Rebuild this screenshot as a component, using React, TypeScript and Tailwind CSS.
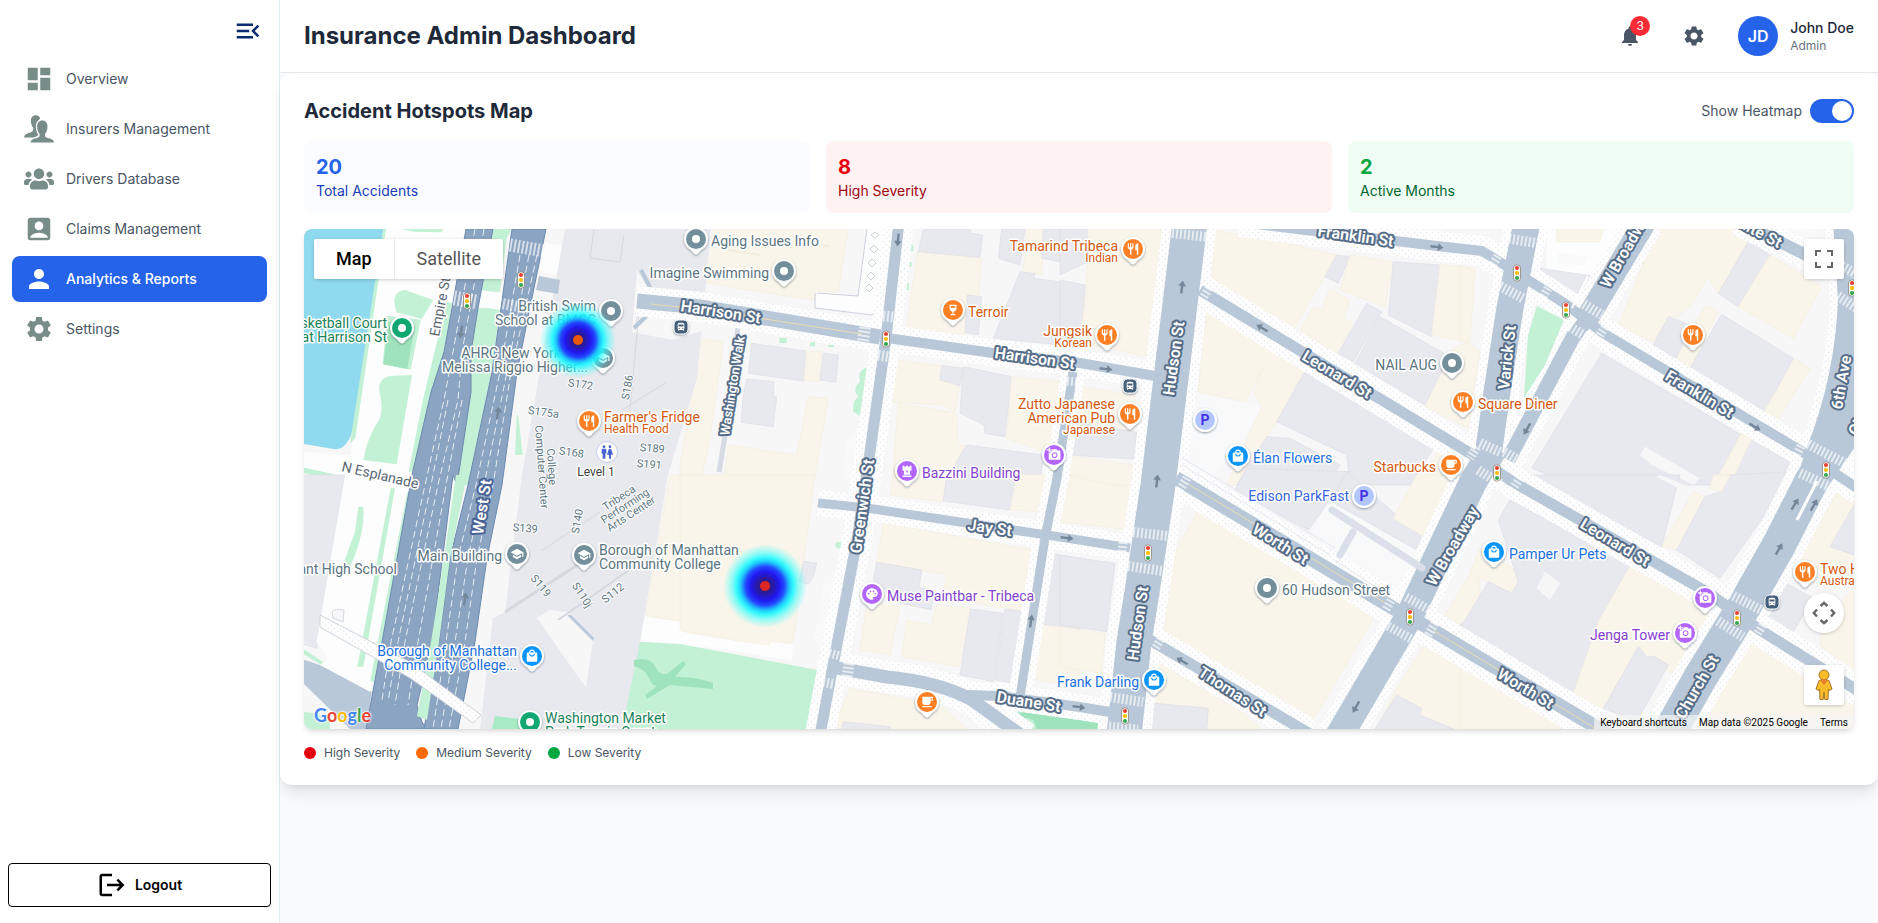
import { useState } from "react";
import type { ReactNode } from "react";
import {
  MdAccountBox,
  MdAddAPhoto,
  MdDashboard,
  MdDirectionsBus,
  MdLocalCafe,
  MdLocalMall,
  MdLogout,
  MdMenuOpen,
  MdNotifications,
  MdPalette,
  MdPerson,
  MdRestaurant,
  MdSchool,
  MdSettings,
  MdWc,
  MdWineBar,
} from "react-icons/md";
import { FaChessRook, FaUsers } from "react-icons/fa";

function TwoPeople({ size, className }: { size: number; className?: string }) {
  return (
    <svg width={size} height={size} viewBox="0 0 30 30" fill="currentColor" className={className} aria-hidden="true">
      <path d="M11.8,1.2C8.6,1.2 6.8,3.6 6.9,7C7,9.6 7.8,12.2 9.2,13.8C9.6,16 9.2,17.2 7.4,17.9C4.4,19 0.6,19.4 0,23.4H10.5L14.5,21 12.8,16 12.4,9 16.2,4.2C15.4,2.2 13.9,1.2 11.8,1.2Z" />
      <path
        d="M18.3,6.4C21.7,6.4 23.6,9 23.5,12.6C23.4,15.6 22.6,18.4 21,20V22.2C21.6,23.6 24,23.9 26,24.6C28.4,25.4 29.8,26.4 30,28.4H6.6C6.8,26.4 8.2,25.4 10.6,24.6C12.6,23.9 15,23.6 15.6,22.2V20C14,18.4 13.2,15.6 13.1,12.6C13,9 14.9,6.4 18.3,6.4Z"
        stroke="#ffffff"
        strokeWidth="2.4"
        paintOrder="stroke"
      />
    </svg>
  );
}

const NAV = [
  { label: "Overview", Icon: MdDashboard },
  { label: "Insurers Management", Icon: TwoPeople },
  { label: "Drivers Database", Icon: FaUsers },
  { label: "Claims Management", Icon: MdAccountBox },
  { label: "Analytics & Reports", Icon: MdPerson, active: true },
  { label: "Settings", Icon: MdSettings },
];

const STATS = [
  { value: "20", label: "Total Accidents", box: "bg-[#fbfcff]", num: "text-[#2563eb]", text: "text-blue-800" },
  { value: "8", label: "High Severity", box: "bg-red-50", num: "text-red-600", text: "text-red-800" },
  { value: "2", label: "Active Months", box: "bg-green-50", num: "text-green-600", text: "text-green-800" },
];

const LEGEND = [
  { label: "High Severity", dot: "bg-red-600" },
  { label: "Medium Severity", dot: "bg-orange-500" },
  { label: "Low Severity", dot: "bg-green-600" },
];

/* ---------- Map data ---------- */

const FILL = {
  tan: "#faf5ea",
  gray: "#e8e9ee",
  lawn: "#c3f1d5",
  wood: "#9fe3bc",
  bare: "#f7f7f7",
  water: "#8fdaee",
  road: "#b9c8d8",
  dots: "url(#dots)",
  hatch: "url(#hatch)",
};
type Fill = keyof typeof FILL;

// Each tile has its own origin; its shapes are drawn in thirds of a pixel.
const TILES: { x: number; y: number; shapes: [Fill, string][] }[] = [
  {
    x: 300,
    y: 225,
    shapes: [
      ["dots", "M255,12H500L460,240 345,780H0V680L150,690 165,600Z"],
      ["water", "M0,12H250L160,610Q140,680 100,672L0,655Z"],
      ["lawn", "M250,12H258L166,640 150,655Z"],
      ["lawn", "M305,12H430L425,22 340,20Z"],
      ["lawn", "M315,195L400,225 365,282 290,262Q268,200 315,195Z"],
      ["lawn", "M262,272L362,284 332,434 248,418Z"],
      ["wood", "M266,290L345,300 322,432 250,418Z"],
      ["lawn", "M270,453L336,450 290,718 190,705Q200,640 240,580 250,540 238,500 232,462 270,453Z"],
      ["lawn", "M440,230L456,235 434,380 394,500 342,740 326,740 370,520Z"],
      ["lawn", "M0,725L135,755 130,772 0,742Z"],
      ["gray", "M0,750L130,775 130,780H0Z"],
      ["lawn", "M578,12H635L620,40 600,200 545,200Z"],
      ["lawn", "M535,250H600L575,440 505,780H470L512,500V380Z"],
      ["dots", "M540,195L606,205 600,255 530,243Z"],
      ["dots", "M735,55L790,62 780,150 720,140Z"],
      ["lawn", "M650,570L655,572 668,690 645,690Z"],
    ],
  },
  {
    x: 680,
    y: 225,
    shapes: [
      ["tan", "M100,12H505L475,200 440,205 400,225 170,190 65,170Z"],
      ["dots", "M560,12H645L600,250 575,272 405,250 410,200 535,212Z"],
      ["gray", "M730,12H870L875,25 908,30 900,98 715,80Z"],
      ["tan", "M712,82L905,100 895,215 855,330 680,310Z"],
      ["gray", "M862,210L905,215 895,330 855,322Z"],
      ["gray", "M965,12H1035L1020,120 955,100Z"],
      ["tan", "M1040,12H1095L1085,150 1030,140Z"],
      ["gray", "M1020,140L1066,146 1062,160 1140,170V360L940,340Z"],
      ["gray", "M1090,12H1140V110L1085,100Z"],
      ["gray", "M215,355L380,378 370,468 205,445Z"],
      ["tan", "M380,378L425,380 418,470 372,465Z"],
      ["gray", "M430,385L475,390 468,472 420,465Z"],
      ["gray", "M200,462L282,470 280,512 290,516 280,605 183,592 190,510Z"],
      ["tan", "M65,340L130,350 90,640 60,780H0V720Z"],
      ["tan", "M385,515L445,520 400,780H130L145,660 350,690Z"],
      ["tan", "M650,405L850,430 840,480 825,560 790,540 630,530Z"],
      ["gray", "M785,422L850,430 840,482 780,465Z"],
      ["gray", "M850,425L995,455 975,635 915,625 912,600 840,565Z"],
      ["tan", "M995,455L1165,470 1120,690 980,640Z"],
      ["tan", "M655,535L830,565 835,660 1000,680 800,780H636Z"],
      ["gray", "M860,660L1090,690 1080,780H800L835,700Z"],
      ["lawn", "M565,425L545,575 520,560Q515,530 535,515 515,490 540,470 530,435 565,425Z"],
      ["lawn", "M298,338H320V354H298ZM390,352H405V364H390ZM445,360H462V367H445ZM690,60H700V78H690ZM684,112H695V125H684ZM676,174H687V195H676Z"],
      ["hatch", "M540,620L500,650 492,740 520,780H545Z"],
    ],
  },
  {
    x: 1060,
    y: 225,
    shapes: [
      ["gray", "M0,12H85L75,115 0,150Z"],
      ["gray", "M0,165L75,180 65,360 0,350Z"],
      ["tan", "M85,12H305L265,395 60,352 80,180Z"],
      ["tan", "M465,15L660,50 830,90 700,315 450,175Z"],
      ["gray", "M830,90L870,95 835,175 795,155Z"],
      ["tan", "M870,90L1000,110 975,245 840,195Z"],
      ["tan", "M810,190L870,225 850,280 880,295 830,385 720,320 760,245 785,255Z"],
      ["gray", "M1000,110L1140,120 1115,335 985,270Z"],
      ["tan", "M1140,118L1245,130 1220,350 1115,330Z"],
      ["gray", "M920,235L965,260 880,410 835,385Z"],
      ["gray", "M960,275L1170,395 1095,540 885,415Z"],
      ["tan", "M1180,370L1225,350 1260,380 1225,610 1095,545Z"],
      ["tan", "M440,255L735,430 650,590 620,635 545,780H500L605,545 580,500 610,425 555,530 415,500Z"],
      ["gray", "M735,440L1130,655 1050,780H870L860,690 650,590Z"],
      ["hatch", "M410,510L605,540 530,690 440,770 355,690Z"],
      ["gray", "M620,635L690,640 840,720 800,780H530Z"],
      ["tan", "M1140,665L1230,700 1210,780H1080Z"],
      ["tan", "M30,480L225,510 220,620 30,590Z"],
      ["gray", "M45,592L230,622 222,702 20,690Z"],
      ["tan", "M10,690L222,720 215,780H0Z"],
    ],
  },
  {
    x: 1460,
    y: 225,
    shapes: [
      ["tan", "M0,120L45,140 30,350 0,350Z"],
      ["dots", "M260,12H480L400,150 260,140Z"],
      ["tan", "M290,12H430L420,50 290,50Z"],
      ["gray", "M240,130L390,152 340,250 230,190Z"],
      ["hatch", "M295,85L385,95 370,122 295,115Z"],
      ["tan", "M590,12H850L865,50 775,205 745,155 695,240 650,275 625,275 580,350 475,305Z"],
      ["gray", "M865,50L930,90 835,245 775,205Z"],
      ["tan", "M930,90L1085,185 1000,340 835,245Z"],
      ["gray", "M625,275L690,300 650,400 580,360Z"],
      ["tan", "M740,240L775,260 690,430 650,400 700,300Z"],
      ["gray", "M785,268L1000,400 910,565 690,430Z"],
      ["tan", "M1005,400L1050,430 950,590 910,565Z"],
      ["gray", "M425,385L640,510 845,630 990,710 955,780H340L215,730Z"],
      ["tan", "M845,625L875,640 810,780H760Z"],
      ["bare", "M555,665L720,760 700,780 575,720 540,690Z"],
      ["hatch", "M970,12H1080L1050,70Z"],
    ],
  },
  {
    x: 300,
    y: 475,
    shapes: [
      ["gray", "M0,0H135L50,520 0,505Z"],
      ["dots", "M135,0H340L300,240 215,640 90,560 50,500Z"],
      ["lawn", "M175,95H190Q195,160 165,240L150,275 132,262 165,170Z"],
      ["lawn", "M272,40H285L190,575H172Z"],
      ["lawn", "M322,50H332L222,620H210Z"],
      ["lawn", "M0,515L90,575 80,580 0,530Z"],
      ["road", "M0,550L60,570 215,650 200,762H150L0,615Z"],
      ["dots", "M60,570L100,540 215,620 210,650Z"],
      ["lawn", "M0,710L50,715 90,740V762H0Z"],
      ["tan", "M1110,0H1200V480L1140,470V440L1035,420Z"],
      ["dots", "M1035,425L1140,440 1145,470 1200,480V520L1020,495Z"],
      ["lawn", "M1015,500L1200,520V762H975Z"],
    ],
  },
  {
    x: 680,
    y: 475,
    shapes: [
      ["tan", "M0,0H405L340,500 265,515 0,465Z"],
      ["dots", "M0,475L265,512 275,500 340,510 335,555 0,505Z"],
      ["gray", "M370,258L410,265 400,305 385,328 358,320Z"],
      ["lawn", "M492,58L508,62 494,114 480,110ZM466,211A10,10 0 1 0 486,211A10,10 0 1 0 466,211Z"],
      ["tan", "M640,0H800L790,80 630,60Z"],
      ["gray", "M800,0H1010L990,105 790,78Z"],
      ["tan", "M1010,0H1110L1090,110 990,105Z"],
      ["tan", "M1140,0H1200V145L1125,130Z"],
      ["tan", "M610,145L1060,225 1030,405 940,395 785,365 800,300 590,262Z"],
      ["gray", "M590,262L725,285 718,335 758,350 755,405 665,385 580,315Z"],
      ["tan", "M560,380L660,395 630,540 540,525Z"],
      ["tan", "M680,435L755,450 770,390 870,400 840,575 665,545Z"],
      ["gray", "M872,402L970,415 940,620 840,600Z"],
      ["gray", "M975,402L1030,410 1005,625 945,615Z"],
      ["gray", "M1110,235L1200,250V470L1075,445Z"],
      ["tan", "M1075,448L1200,465V640L1055,610Z"],
      ["tan", "M510,640L780,690 860,762H460Z"],
      ["gray", "M490,740L630,755V762H485Z"],
      ["lawn", "M925,695L1200,725V762H1015Z"],
      ["wood", "M1010,735Q1015,700 1060,715 1090,705 1110,725 1130,720 1200,735V762H1070L1060,735 1040,728Z"],
      ["hatch", "M475,280L425,525 402,485 435,310Z"],
    ],
  },
  {
    x: 1060,
    y: 475,
    shapes: [
      ["tan", "M0,0L225,40 210,165 0,140Z"],
      ["gray", "M0,240L165,265 140,470 0,450Z"],
      ["tan", "M0,455L135,475 125,595 0,575Z"],
      ["tan", "M415,105L580,190 945,400 940,430 760,735 500,600 310,480 340,240Z"],
      ["tan", "M290,560L560,720 600,762H270Z"],
      ["gray", "M285,685L445,700 440,762H270Z"],
      ["wood", "M0,725L110,738Q142,745 140,762H0Z"],
      ["hatch", "M810,75L1120,240 1030,375 750,175Z"],
      ["gray", "M560,-20L870,-10 745,165 525,45Z"],
      ["gray", "M860,-10L1090,190 1070,225 815,80Z"],
      ["tan", "M1070,0H1215L1100,190 1000,130Z"],
      ["tan", "M1235,290L1260,300V410L1200,450 1155,420Z"],
      ["gray", "M1245,410L1260,380V480L1200,450Z"],
      ["tan", "M1095,505L1260,600V762H950L1005,650Z"],
      ["gray", "M1010,660L1085,700 1080,720 1180,762H945Z"],
    ],
  },
  {
    x: 1460,
    y: 475,
    shapes: [
      ["tan", "M30,295L155,355 190,300 60,220Z"],
      ["gray", "M150,75L510,270 415,440 340,655 0,460 85,320 155,355 175,320 115,135Z"],
      ["bare", "M255,290L300,325 270,375 230,340Z"],
      ["tan", "M510,272L700,385 775,420 640,600 535,515 430,700 340,655 415,440Z"],
      ["gray", "M535,515L560,545 585,545 625,570 530,740 430,700Z"],
      ["gray", "M215,0H660L605,215 465,140Z"],
      ["bare", "M600,0L760,65 740,85 590,5Z"],
      ["tan", "M700,50L735,65 650,225 605,215Z"],
      ["gray", "M735,65L780,50 800,0 1000,-10 985,20 780,310 650,225Z"],
      ["tan", "M760,0L810,0 785,50 750,40Z"],
      ["tan", "M1130,55L1182,80V340L1020,250Z"],
      ["gray", "M1182,90V240L1110,215Z"],
      ["gray", "M970,320L1060,370 1000,470 920,430Z"],
      ["tan", "M1090,440L1182,340V590L1080,510Z"],
      ["tan", "M890,470L1182,640V762H700Z"],
      ["tan", "M0,570L400,762H0Z"],
    ],
  },
];

// Centre lines of the streets: path, road width, pavement width.
const STREETS: [string, number, number][] = [
  ["M637,301L700,307 880,337", 15, 30],
  ["M880,337L993,353 1080,363 1155,376", 10, 27],
  ["M899,222L886,338 870,452 857,540 834,660 820,735", 11, 30],
  ["M1190,222L1158,485 1142,592 1134,642 1124,735", 35, 54],
  ["M1240,222L1330,233 1437,246 1482,251 1500,262 1567,305 1603,333 1803,452 1860,490", 10, 30],
  ["M1200,290L1473,455 1513,482 1707,592 1760,630 1860,692", 11, 32],
  ["M818,503L867,508 960,522 1047,535 1130,548", 9, 26],
  ["M1073,372L1057,478 1045,538 1020,697", 9, 24],
  ["M837,668L887,677Q940,682 972,700L1025,738", 13, 32],
  ["M967,695L1000,696 1080,707 1110,712", 10, 26],
  ["M1176,478L1393,608 1427,627 1503,672 1620,741", 14, 36],
  ["M1150,640L1310,734", 11, 30],
  ["M1645,222L1585,322", 23, 38],
  ["M1585,322L1573,337 1508,460", 15, 32],
  ["M1494,448L1473,482 1410,615 1338,738", 28, 44],
  ["M1527,222L1510,308 1497,392 1486,470", 27, 44],
  ["M1848,222L1853,300Q1850,380 1820,455L1812,480", 30, 46],
  ["M1870,395L1812,480 1779,545 1745,605 1700,678 1668,735", 34, 52],
  ["M1738,222L1760,232 1840,272", 12, 28],
];

const CENTRE_STRIPES = ["M650,304L700,309 862,334", "M1188,484L1384,602", "M1434,631L1600,731"];

const CROSSWALKS: [string, number][] = [
  ["M1172,233L1208,237", 10],
  ["M1133,532L1167,536", 10],
  ["M1128,566L1162,571", 10],
  ["M1110,697L1143,702", 10],
  ["M1109,726L1138,729", 9],
  ["M1123,542L1122,553", 9],
  ["M865,327L863,341", 12],
  ["M883,316L893,317", 11],
  ["M878,355L890,357", 11],
  ["M849,663L847,677", 11],
  ["M829,653L840,656", 9],
  ["M823,682L834,684", 10],
  ["M1067,381L1077,382", 9],
  ["M1209,288L1203,298", 9],
  ["M1477,447L1470,458", 9],
  ["M1520,478L1512,490", 9],
  ["M1187,478L1179,491", 9],
  ["M1393,597L1385,611", 9],
  ["M1435,623L1427,637", 9],
  ["M1161,639L1155,649", 9],
  ["M1406,597L1430,610", 9],
  ["M1388,626L1413,640", 9],
  ["M1505,238L1542,244", 10],
  ["M1500,286L1524,299", 10],
  ["M1480,443L1500,452", 10],
  ["M1504,452L1518,460", 10],
  ["M1478,470L1502,485", 10],
  ["M1498,256L1492,266", 9],
  ["M1548,288L1542,299", 9],
  ["M1577,300L1602,315", 10],
  ["M1570,327L1587,337", 10],
  ["M1605,327L1598,338", 9],
  ["M1838,264L1858,275", 10],
  ["M1838,296L1858,309", 10],
  ["M1808,444L1850,466", 10],
  ["M1800,473L1832,488", 10],
  ["M1801,446L1796,456", 9],
  ["M1730,594L1763,611", 10],
  ["M1718,621L1743,637", 10],
  ["M1763,625L1756,636", 9],
  ["M510,245L544,251", 13],
  ["M454,298L477,302", 15],
  ["M499,303L531,309", 11],
];

const ARROWS: [number, number, number][] = [
  [898, 240, 186],
  [1182, 287, 7],
  [1262, 328, -60],
  [1437, 247, 97],
  [1106, 369, 97],
  [1157, 481, 7],
  [1527, 429, 210],
  [1755, 427, 121],
  [465, 599, 10],
  [461, 332, 190],
  [498, 413, 10],
  [1067, 538, 97],
  [1031, 621, 8],
  [1079, 707, 98],
  [1182, 661, -60],
  [1356, 707, 210],
  [1795, 504, 32],
  [1814, 505, 30],
  [1779, 549, 30],
];

const SIGNALS: [number, number][] = [
  [521, 280],
  [467, 301],
  [886, 339],
  [1517, 273],
  [1566, 310],
  [1497, 473],
  [1826, 470],
  [1852, 288],
  [1148, 553],
  [1125, 716],
  [1410, 617],
  [1737, 618],
];

const STREET_NAMES: [string, number, number, number, number?][] = [
  ["Harrison St", 680, 311, 9],
  ["Harrison St", 994, 358, 8],
  ["Washington Walk", 729, 436, -81, 13],
  ["Greenwich St", 861, 554, -82],
  ["Hudson St", 1174, 396, -82],
  ["Hudson St", 1138, 661, -82],
  ["Varick St", 1509, 390, -84],
  ["W Broadway", 1609, 289, -60],
  ["W Broadway", 1435, 587, -60],
  ["6th Ave", 1842, 410, -80],
  ["Church St", 1684, 720, -60],
  ["Church St", 1857, 437, -60],
  ["Franklin St", 1317, 236, 8],
  ["Franklin St", 1664, 379, 31],
  ["Leonard St", 1301, 359, 31],
  ["Leonard St", 1579, 527, 31],
  ["Worth St", 1251, 532, 32],
  ["Worth St", 1496, 677, 31],
  ["Thomas St", 1197, 675, 33],
  ["Jay St", 967, 530, 8],
  ["Duane St", 996, 702, 9],
  ["White St", 1725, 220, 28],
];

const INDOOR_NAMES: [string, number, number, number][] = [
  ["S172", 580, 388, 8],
  ["S186", 631, 388, -80],
  ["S175a", 543, 416, 8],
  ["S168", 571, 456, 8],
  ["S189", 652, 452, 5],
  ["S191", 649, 468, 5],
  ["S139", 525, 532, 5],
  ["S140", 581, 522, -80],
  ["S119", 538, 588, 50],
  ["S110j", 579, 597, 57],
  ["S112", 615, 596, -38],
  ["Computer Center", 538, 467, 86],
  ["College", 548, 467, 86],
  ["Tribeca", 621, 501, -33],
  ["Performing", 627, 509, -33],
  ["Arts Center", 633, 517, -33],
];

const TONES = {
  slate: { pin: "#738f9b", text: "#5b7480" },
  orange: { pin: "#ff7f25", text: "#d4570e" },
  green: { pin: "#13a871", text: "#188259" },
  blue: { pin: "#0a94ff", text: "#1a6fe0" },
  purple: { pin: "#b266ff", text: "#8441cf" },
};

const GLYPHS = {
  dot: <circle r="4" fill="#fff" />,
  food: <MdRestaurant x="-7" y="-7" size={14} />,
  cafe: <MdLocalCafe x="-7" y="-7" size={14} />,
  bag: <MdLocalMall x="-7" y="-7" size={14} />,
  school: <MdSchool x="-7" y="-7" size={14} />,
  wine: <MdWineBar x="-7" y="-7" size={14} />,
  camera: <MdAddAPhoto x="-7" y="-8" size={14} />,
  palette: <MdPalette x="-7" y="-7" size={14} />,
  rook: <FaChessRook x="-6" y="-6" size={12} />,
};

type Place = {
  x: number;
  y: number;
  tone: keyof typeof TONES;
  glyph: keyof typeof GLYPHS;
  lines?: string[];
  sub?: string;
  side?: "left" | "right";
  top?: number;
};

const PLACES: Place[] = [
  { x: 696, y: 239, tone: "slate", glyph: "dot", lines: ["Aging Issues Info"], side: "right", top: 246 },
  { x: 784, y: 271, tone: "slate", glyph: "dot", lines: ["Imagine Swimming"], side: "left", top: 278 },
  { x: 953, y: 310, tone: "orange", glyph: "wine", lines: ["Terroir"], side: "right", top: 317 },
  { x: 1054, y: 455, tone: "purple", glyph: "camera" },
  { x: 907, y: 471, tone: "purple", glyph: "rook", lines: ["Bazzini Building"], side: "right", top: 478 },
  { x: 402, y: 328, tone: "green", glyph: "dot", lines: ["Basketball Court", "at Harrison St"], side: "left", top: 328 },
  { x: 611, y: 311, tone: "slate", glyph: "dot", lines: ["British Swim", "School at BMCC"], side: "left", top: 311 },
  { x: 603, y: 358, tone: "slate", glyph: "school", lines: ["AHRC New York City", "Melissa Riggio Higher..."], side: "left", top: 358 },
  { x: 589, y: 421, tone: "orange", glyph: "food", lines: ["Farmer's Fridge"], sub: "Health Food", side: "right", top: 422 },
  { x: 1133, y: 249, tone: "orange", glyph: "food", lines: ["Tamarind Tribeca"], sub: "Indian", side: "left", top: 251 },
  { x: 1107, y: 335, tone: "orange", glyph: "food", lines: ["Jungsik"], sub: "Korean", side: "left", top: 336 },
  { x: 1130, y: 414, tone: "orange", glyph: "food", lines: ["Zutto Japanese", "American Pub"], sub: "Japanese", side: "left", top: 409 },
  { x: 1238, y: 456, tone: "blue", glyph: "bag", lines: ["Élan Flowers"], side: "right", top: 463 },
  { x: 1452, y: 363, tone: "slate", glyph: "dot", lines: ["NAIL AUG"], side: "left", top: 370 },
  { x: 1463, y: 402, tone: "orange", glyph: "food", lines: ["Square Diner"], side: "right", top: 409 },
  { x: 1451, y: 465, tone: "orange", glyph: "cafe", lines: ["Starbucks"], side: "left", top: 472 },
  { x: 1693, y: 335, tone: "orange", glyph: "food" },
  { x: 517, y: 554, tone: "slate", glyph: "school", lines: ["Main Building"], side: "left", top: 561 },
  { x: 584, y: 555, tone: "slate", glyph: "school", lines: ["Borough of Manhattan", "Community College"], side: "right", top: 555 },
  { x: 532, y: 656, tone: "blue", glyph: "bag", lines: ["Borough of Manhattan", "Community College..."], side: "left", top: 656 },
  { x: 530, y: 722, tone: "green", glyph: "dot", lines: ["Washington Market", "Park Tennis Court"], side: "right", top: 723 },
  { x: 872, y: 594, tone: "purple", glyph: "palette", lines: ["Muse Paintbar - Tribeca"], side: "right", top: 601 },
  { x: 927, y: 702, tone: "orange", glyph: "cafe" },
  { x: 1267, y: 588, tone: "slate", glyph: "dot", lines: ["60 Hudson Street"], side: "right", top: 595 },
  { x: 1154, y: 680, tone: "blue", glyph: "bag", lines: ["Frank Darling"], side: "left", top: 687 },
  { x: 1494, y: 552, tone: "blue", glyph: "bag", lines: ["Pamper Ur Pets"], side: "right", top: 559 },
  { x: 1705, y: 598, tone: "purple", glyph: "camera" },
  { x: 1685, y: 633, tone: "purple", glyph: "camera", lines: ["Jenga Tower"], side: "left", top: 640 },
  { x: 1805, y: 572, tone: "orange", glyph: "food", lines: ["Two Hands"], sub: "Australian", side: "right", top: 574 },
];

const HALO = { stroke: "#ffffff", strokeWidth: 3, strokeLinejoin: "round", paintOrder: "stroke" } as const;

function PlaceMark({ place }: { place: Place }) {
  const tone = TONES[place.tone];
  const right = place.side === "right";
  const textX = right ? place.x + 15 : place.x - 15;
  const anchor = right ? "start" : "end";
  const lines = place.lines ?? [];
  const top = place.top ?? 0;
  return (
    <g>
      <g transform={`translate(${place.x} ${place.y})`} color="#fff">
        <path
          d="M0,15.5C-2,15.5 -3,12.5 -6.5,10A12,12 0 1 1 6.5,10C3,12.5 2,15.5 0,15.5Z"
          fill="#fff"
          filter="url(#lift)"
        />
        <circle r="10" fill={tone.pin} />
        {GLYPHS[place.glyph]}
      </g>
      {lines.map((line, i) => (
        <text key={line} x={textX} y={top + i * 14} textAnchor={anchor} fontSize="14" fill={tone.text} {...HALO}>
          {line}
        </text>
      ))}
      {place.sub && (
        <text x={textX} y={top + lines.length * 14 - 3} textAnchor={anchor} fontSize="12" fill={tone.text} {...HALO}>
          {place.sub}
        </text>
      )}
    </g>
  );
}

function CityMap({ heat }: { heat: boolean }) {
  return (
    <svg
      viewBox="304 229 1550 500"
      preserveAspectRatio="xMidYMid slice"
      role="img"
      aria-label="Street map of accident hotspots"
      className="block h-full w-full font-['Roboto',sans-serif]"
    >
      <defs>
        <pattern id="dots" width="6" height="6" patternUnits="userSpaceOnUse">
          <rect width="6" height="6" fill="#ffffff" />
          <circle cx="1.5" cy="1.5" r="0.9" fill="#ebedf0" />
          <circle cx="4.5" cy="4.5" r="0.9" fill="#ebedf0" />
        </pattern>
        <pattern id="hatch" width="5" height="5" patternUnits="userSpaceOnUse" patternTransform="rotate(40)">
          <rect width="5" height="5" fill="#ffffff" />
          <rect width="1" height="5" fill="#dfe1e6" />
        </pattern>
        <filter id="lift" x="-30%" y="-30%" width="160%" height="170%">
          <feDropShadow dx="0" dy="1" stdDeviation="1" floodColor="#33475b" floodOpacity="0.55" />
        </filter>
        <radialGradient id="heat">
          <stop offset="0" stopColor="#2b1a5e" />
          <stop offset="0.18" stopColor="#2a1a9c" />
          <stop offset="0.34" stopColor="#2018f0" />
          <stop offset="0.46" stopColor="#1a40ff" stopOpacity="0.96" />
          <stop offset="0.58" stopColor="#12c4ff" stopOpacity="0.94" />
          <stop offset="0.67" stopColor="#14f8ff" stopOpacity="0.88" />
          <stop offset="0.8" stopColor="#2cffff" stopOpacity="0.5" />
          <stop offset="1" stopColor="#40ffff" stopOpacity="0" />
        </radialGradient>
      </defs>

      <rect x="304" y="229" width="1550" height="500" fill="#f7f7f7" />

      {TILES.map((tile) => (
        <g key={`${tile.x}-${tile.y}`} transform={`translate(${tile.x} ${tile.y}) scale(0.33333)`}>
          {tile.shapes.map(([fill, d]) => (
            <path
              key={d}
              d={d}
              fill={FILL[fill]}
              stroke={fill === "gray" ? "#dcdee7" : fill === "tan" ? "#f4eedf" : "none"}
              strokeWidth="2"
            />
          ))}
        </g>
      ))}

      {/* College building and the wedge-shaped court inside it */}
      <path d="M565,229H711L697,378 668,475 640,642 628,729H480L493,618 505,612 522,475 547,330Z" fill="#e8e9ee" />
      <path d="M640,642L680,644 818,670 808,729H622Z" fill="#c3f1d5" />
      <path
        d="M634,660C661,655 651,675 667,674L683,661 686,664 675,677Q695,676 713,683V689L670,685 647,699 645,695 657,686C647,685 653,672 634,666Z"
        fill="#9fe3bc"
      />
      <path d="M495,716L520,719V729H492Z" fill="#a8eac3" />
      <path d="M637,270L655,300 712,312V328L672,340 632,332Z" fill="#f7f7f7" />
      <path d="M537,618L550,610 567,612 593,640 586,688Z" fill="#f7f7f7" />
      <path d="M567,615H571L594,638 593,641Z" fill="#b9c8d8" />
      <g fill="none" stroke="#d6d8e0">
        <path d="M505,612L582,562" strokeWidth="3" />
        <path d="M558,620L632,568" strokeWidth="2" />
        <path d="M622,410L667,382M594,229L590,258 620,262 624,235M640,300L630,410M541,551L600,512" strokeWidth="1" />
      </g>
      <path d="M654,262C650,285 640,300 634,330" fill="none" stroke="#e0e2e8" strokeWidth="1" />
      <path d="M641,270L655,297M655,308L634,328" stroke="#b9c8d8" strokeWidth="4" />
      <path d="M728,250L760,255M775,240L830,246" stroke="#f4eedf" strokeWidth="2" />

      {/* Walkway west of Greenwich and the diamond planters */}
      <path d="M738,325L731,400 719,472" fill="none" stroke="#d5dae4" strokeWidth="5" />
      <g fill="none" stroke="#cdd1db" strokeWidth="1">
        <path d="M867,229L858,296 817,293M886,229L880,308 872,315 815,308V293" />
        <path d="M875,232l4,3-4,3-4-3zM874,245l4,4-4,4-4-4zM872,259l4,4-4,4-4-4zM871,272l4,4-4,4-4-4zM869,284l4,4-4,4-4-4z" />
      </g>

      {/* Pavements, then carriageways */}
      <g fill="none" stroke="url(#dots)" strokeLinejoin="round">
        {STREETS.map(([d, , pavement]) => (
          <path key={d} d={d} strokeWidth={pavement} />
        ))}
      </g>
      <g fill="none" stroke="#b9c8d8" strokeLinejoin="round">
        {STREETS.map(([d, road]) => (
          <path key={d} d={d} strokeWidth={road} />
        ))}
      </g>
      <path d="M1537,306L1564,320 1545,365 1524,398 1528,335Z" fill="#c3f1d5" />
      <path d="M1588,276L1572,308" stroke="#ffffff" strokeWidth="2" />
      <path d="M1817,481L1797,520" stroke="#ffffff" strokeWidth="3" />
      <path d="M1332,510L1422,568M1353,532L1340,555" stroke="#dbdfe9" strokeWidth="7" strokeLinecap="round" />
      <g fill="none" stroke="#e5e7ee" strokeWidth="1">
        <path d="M1182,465L1330,555M1335,560L1395,600M1182,458L1335,548" />
      </g>
      <g fill="none" stroke="#e9dcb2" strokeWidth="1">
        {CENTRE_STRIPES.map((d) => (
          <path key={d} d={d} />
        ))}
      </g>

      {/* West Street */}
      <path d="M539,276L560,280 558,294 536,290Z" fill="#b9c8d8" />
      <g fill="#8ba4c1" stroke="#6c8ab2" strokeWidth="1">
        <path d="M466,229H493L478,308 471,352V392L457,485 453,475 432,642 417,705 422,722 427,729H366L382,642 412,475 431,392 444,352 452,308Z" />
        <path d="M512,229H546L517,372 502,485 487,558 475,642 458,729H424L439,642 450,558 468,485 492,372Z" />
      </g>
      <path d="M456,475L467,475 450,558 439,642 427,720 417,716 420,700 431,642 444,558Z" fill="#c3f1d5" />
      <g fill="none" stroke="#e6ecf4" strokeWidth="1" strokeDasharray="7 4">
        <path d="M475,229L461,308 453,352 444,400 425,485 391,642 382,700" />
        <path d="M484,229L470,308 462,352 458,400 438,485 405,642 395,705" />
        <path d="M448,400L431,485 398,642 388,702" />
        <path d="M462,400L446,485 418,642 408,705" />
        <path d="M520,255L500,372 476,485 458,558 446,642 433,729" />
        <path d="M529,255L507,372 484,485 468,558 455,642 441,729" />
        <path d="M537,255L511,372 493,485 477,558 465,642 449,729" />
      </g>
      <path d="M320,615L410,662 481,715 473,723 410,678 320,627Z" fill="url(#dots)" stroke="#cfd3dd" strokeWidth="1" />
      <path d="M332,612Q334,608 344,610L343,622 333,618Z" fill="#f7f7f7" stroke="#d6d8e0" strokeWidth="1" />

      <g fill="none" stroke="#ffffff" strokeOpacity="0.65" strokeDasharray="2 2">
        {CROSSWALKS.map(([d, width]) => (
          <path key={d} d={d} strokeWidth={width} />
        ))}
      </g>
      <g fill="#74869a">
        {ARROWS.map(([x, y, angle]) => (
          <path
            key={`${x}-${y}`}
            transform={`translate(${x} ${y}) rotate(${angle})`}
            d="M0,-6.5L3.8,-1H1.2V6.5H-1.2V-1H-3.8Z"
          />
        ))}
      </g>

      {SIGNALS.map(([x, y]) => (
        <g key={`${x}-${y}`} transform={`translate(${x} ${y})`}>
          <rect x="-3.5" y="-8" width="7" height="16" rx="3" fill="#fff" stroke="#8e8378" strokeWidth="0.8" />
          <circle cy="-5" r="2.1" fill="#ea4335" />
          <circle r="2.1" fill="#fbbc04" />
          <circle cy="5" r="2.1" fill="#34a853" />
        </g>
      ))}

      {/* Street names */}
      <g fill="#ffffff" stroke="#566d88" strokeWidth="4" strokeLinejoin="round" fontWeight="600" paintOrder="stroke">
        {STREET_NAMES.map(([name, x, y, angle, size]) => (
          <text key={`${name}-${x}`} fontSize={size ?? 16} transform={`translate(${x} ${y}) rotate(${angle})`}>
            {name}
          </text>
        ))}
        <text fontSize="16" stroke="#4a6395" transform="translate(483 535) rotate(-81)">
          West St
        </text>
      </g>
      <g fontSize="14" fill="#5a6675" {...HALO}>
        <text transform="translate(439 337) rotate(-79)">Empire State</text>
        <text transform="translate(341 471) rotate(13)">N Esplanade</text>
        <text x="397" y="574" textAnchor="end" fill="#5b7480">
          Stuyvesant High School
        </text>
      </g>
      <g fontSize="11" fill="#5b7480" textAnchor="middle" {...HALO} strokeWidth={2}>
        {INDOOR_NAMES.map(([name, x, y, angle]) => (
          <text key={name} transform={`translate(${x} ${y}) rotate(${angle})`}>
            {name}
          </text>
        ))}
      </g>
      <text x="596" y="476" fontSize="12" textAnchor="middle" fill="#3c4043" {...HALO}>
        Level 1
      </text>

      {/* Points of interest */}
      {[
        [681, 327],
        [1130, 386],
        [1772, 602],
      ].map(([x, y]) => (
        <g key={x} transform={`translate(${x} ${y})`} color="#fff">
          <rect x="-7" y="-7" width="14" height="14" rx="4.5" fill="#455f7a" stroke="#fff" strokeWidth="1" filter="url(#lift)" />
          <MdDirectionsBus x="-5" y="-5" size={10} />
        </g>
      ))}
      {[
        [1205, 420],
        [1364, 496],
      ].map(([x, y]) => (
        <g key={x} transform={`translate(${x} ${y})`}>
          <circle r="12" fill="#fff" filter="url(#lift)" />
          <circle r="10" fill="#b3c6ff" />
          <text y="5" textAnchor="middle" fontSize="14" fontWeight="700" fill="#4533e8">
            P
          </text>
        </g>
      ))}
      <text x="1349" y="501" textAnchor="end" fontSize="14" fill="#3763dc" {...HALO}>
        Edison ParkFast
      </text>
      <g transform="translate(607 452)" color="#4a62cf">
        <circle r="10.5" fill="#fff" stroke="#c3cbf5" strokeWidth="1" />
        <MdWc x="-8" y="-8" size={16} />
      </g>
      {PLACES.map((place) => (
        <PlaceMark key={`${place.x}-${place.y}`} place={place} />
      ))}

      {heat && (
        <g>
          <circle cx="578" cy="340" r="38" fill="url(#heat)" />
          <circle cx="765" cy="586" r="42" fill="url(#heat)" />
        </g>
      )}
      <circle cx="578" cy="340" r="5" fill="#ea580c" />
      <circle cx="765" cy="586" r="5" fill="#dc2626" />
    </svg>
  );
}

function MapButton({ label, className, children }: { label: string; className: string; children: ReactNode }) {
  return (
    <button
      type="button"
      aria-label={label}
      className={`flex size-10 items-center justify-center bg-white shadow-[0_1px_4px_-1px_rgba(0,0,0,0.3)] ${className}`}
    >
      {children}
    </button>
  );
}

function Pegman() {
  return (
    <svg width="20" height="32" viewBox="0 0 20 32" aria-hidden="true">
      <g fill="#fbbc2c" stroke="#a5772a" strokeWidth="1" strokeLinejoin="round">
        <path d="M5,11.5Q10,9 15,11.5L18,20 15.5,21.5 14.5,20 14,30.5H10.8L10,23 9.2,30.5H6L5.5,20 4.5,21.5 2,20Z" />
        <circle cx="10" cy="6" r="5" />
      </g>
      <path d="M6,11.5H14L10,16Z" fill="#e37f2c" />
    </svg>
  );
}

export default function App() {
  const [heat, setHeat] = useState(true);

  return (
    <div className="flex min-h-screen bg-[#f8fafc] font-['Inter',sans-serif]">
      <aside className="flex w-[280px] shrink-0 flex-col border-r border-[#e3eef2] bg-white">
        <div className="flex h-14 items-start justify-end px-4 pt-4">
          <button type="button" aria-label="Collapse menu" className="text-[#0b2a6f]">
            <MdMenuOpen size={30} />
          </button>
        </div>
        <nav className="flex flex-col gap-1 px-3">
          {NAV.map(({ label, Icon, active }) => (
            <a
              key={label}
              href="#"
              aria-current={active ? "page" : undefined}
              className={
                active
                  ? "flex items-center gap-3 rounded-lg bg-[#2563eb] px-3 py-2 text-sm font-medium text-white"
                  : "flex items-center gap-3 rounded-lg px-3 py-2 text-sm text-gray-600"
              }
            >
              <Icon size={30} className={active ? "text-white" : "text-[#788d88]"} />
              {label}
            </a>
          ))}
        </nav>
        <div className="mt-auto px-2 pb-4">
          <button
            type="button"
            className="flex h-11 w-full items-center justify-center gap-2 rounded border border-black text-sm font-semibold text-black"
          >
            <MdLogout size={30} />
            Logout
          </button>
        </div>
      </aside>

      <div className="flex min-w-0 flex-1 flex-col">
        <header className="flex items-center justify-between border-b border-gray-200 bg-white px-6 py-4">
          <h1 className="text-2xl font-bold text-gray-800">Insurance Admin Dashboard</h1>
          <div className="flex items-center gap-6">
            <button type="button" aria-label="Notifications" className="relative p-2 text-gray-600">
              <MdNotifications size={24} />
              <span className="absolute top-0 right-0 flex size-5 items-center justify-center rounded-full bg-red-500 text-xs text-white">
                3
              </span>
            </button>
            <button type="button" aria-label="Settings" className="p-2 text-gray-600">
              <MdSettings size={24} />
            </button>
            <div className="flex items-center gap-3">
              <div className="flex size-10 items-center justify-center rounded-full bg-[#2563eb] font-semibold text-white">
                JD
              </div>
              <div>
                <p className="text-sm font-medium text-gray-800">John Doe</p>
                <p className="text-xs text-gray-500">Admin</p>
              </div>
            </div>
          </div>
        </header>

        <main>
          <section className="rounded-xl bg-white p-6 shadow-lg">
            <div className="mb-4 flex items-center justify-between">
              <h2 className="text-xl font-bold text-gray-800">Accident Hotspots Map</h2>
              <label className="flex cursor-pointer items-center gap-2">
                <span className="text-sm text-gray-600">Show Heatmap</span>
                <input
                  type="checkbox"
                  role="switch"
                  checked={heat}
                  onChange={(e) => setHeat(e.target.checked)}
                  className="peer sr-only"
                />
                <span className="flex h-6 w-11 items-center rounded-full bg-gray-200 px-0.5 peer-checked:bg-[#2563eb] peer-checked:[&>span]:translate-x-5">
                  <span className="size-5 rounded-full bg-white transition-transform" />
                </span>
              </label>
            </div>

            <div className="mb-4 grid grid-cols-3 gap-4">
              {STATS.map((stat) => (
                <div key={stat.label} className={`rounded-lg p-3 ${stat.box}`}>
                  <p className={`text-xl font-bold ${stat.num}`}>{stat.value}</p>
                  <p className={`text-sm ${stat.text}`}>{stat.label}</p>
                </div>
              ))}
            </div>

            <div className="relative h-[500px] overflow-hidden rounded-lg font-['Roboto',sans-serif] shadow-md">
              <CityMap heat={heat} />
              <div className="absolute top-2.5 left-2.5 flex h-10 rounded-xs bg-white text-lg shadow-[0_1px_4px_-1px_rgba(0,0,0,0.3)]">
                <button type="button" className="border-r border-gray-200 px-[22px] font-medium text-black">
                  Map
                </button>
                <button type="button" className="px-[22px] text-[#565656]">
                  Satellite
                </button>
              </div>
              <div className="absolute top-2.5 right-2.5">
                <MapButton label="Toggle fullscreen view" className="rounded-xs">
                  <svg width="18" height="18" viewBox="0 0 18 18" fill="#666" aria-hidden="true">
                    <path d="M0,0V6H2V2H6V0ZM18,0H12V2H16V6H18ZM16,16H12V18H18V12H16ZM2,12H0V18H6V16H2Z" />
                  </svg>
                </MapButton>
              </div>
              <div className="absolute right-2.5 bottom-6 flex flex-col gap-8">
                <MapButton label="Map camera controls" className="rounded-full">
                  <svg width="24" height="24" viewBox="0 0 24 24" fill="none" stroke="#666" strokeWidth="2.4" aria-hidden="true">
                    <path d="M8.5,5L12,1.8 15.5,5M8.5,19L12,22.2 15.5,19M5,8.5L1.8,12 5,15.5M19,8.5L22.2,12 19,15.5" />
                  </svg>
                </MapButton>
                <MapButton label="Street View" className="rounded-xs">
                  <Pegman />
                </MapButton>
              </div>
              <div className="absolute bottom-0 left-2.5 font-['Lato',sans-serif] text-lg leading-7 font-bold [text-shadow:0_0_2px_#fff,0_0_2px_#fff,0_0_3px_#fff]">
                <span className="text-[#4285f4]">G</span>
                <span className="text-[#ea4335]">o</span>
                <span className="text-[#fbbc04]">o</span>
                <span className="text-[#4285f4]">g</span>
                <span className="text-[#34a853]">l</span>
                <span className="text-[#ea4335]">e</span>
              </div>
              <div className="absolute right-0 bottom-0 flex h-3.5 items-center gap-3 bg-[#f5f5f5]/70 px-1.5 text-[10px] text-black">
                <button type="button">Keyboard shortcuts</button>
                <span>Map data ©2025 Google</span>
                <a href="#">Terms</a>
              </div>
            </div>

            <ul className="mt-4 flex gap-4 text-xs text-gray-600">
              {LEGEND.map((item) => (
                <li key={item.label} className="flex items-center gap-2">
                  <span className={`size-3 rounded-full ${item.dot}`} />
                  {item.label}
                </li>
              ))}
            </ul>
          </section>
        </main>
      </div>
    </div>
  );
}
